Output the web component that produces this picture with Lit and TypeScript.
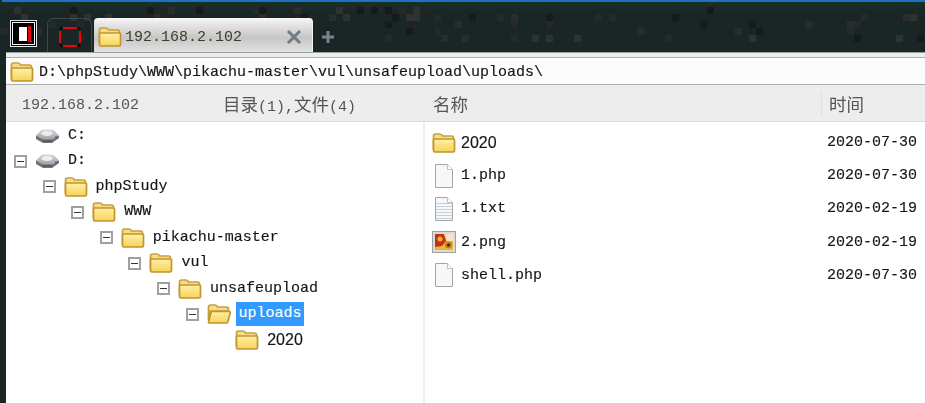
import { LitElement, html, css, svg } from "lit";
import { customElement } from "lit/decorators.js";

const folder = (open = false) => html`<svg class="ico" width="24" height="22" viewBox="0 0 24 22">
  <defs>
    <linearGradient id="fy" x1="0" y1="0" x2="0" y2="1">
      <stop offset="0" stop-color="#fff1a8" />
      <stop offset="1" stop-color="#f7d257" />
    </linearGradient>
  </defs>
  <path d="M1.500 17V4q0-2 2-2h4.500q2 0 2.500 2h9q2 0 2 2v2H3z" fill="#f6dc86" stroke="#c9a038" stroke-width="1.700" />
  ${open
    ? svg`<path d="M1.500 19 4 9.500q.3-1 1.500-1H22q1.600 0 1.200 1.500l-2.400 9q-.3 1-1.500 1H3q-1.800 0-1.500-1z" fill="url(#fy)" stroke="#c09530" stroke-width="1.700" />`
    : svg`<path d="M1.500 18.500V8q0-1 1-1h19q1 0 1 1v10.500q0 1.500-1.500 1.500H3q-1.500 0-1.500-1.500z" fill="url(#fy)" stroke="#c09530" stroke-width="1.700" />`}
</svg>`;

const drive = () => html`<svg class="ico" width="25" height="16" viewBox="0 0 25 16">
  <defs>
    <linearGradient id="dg" x1="0" y1="0" x2="0" y2="1">
      <stop offset="0" stop-color="#d9dadb" />
      <stop offset="1" stop-color="#9da0a3" />
    </linearGradient>
  </defs>
  <path d="M1 8 7 2h11l6 6v2l-7 5H8l-7-4z" fill="#6e7275" />
  <path d="M1 7.500 7 1.500h11l6 6-6.500 4H8z" fill="url(#dg)" />
  <ellipse cx="12" cy="5.500" rx="5.500" ry="2.400" fill="#eceded" />
  <path d="M8 13h9" stroke="#44484b" />
  <rect x="20" y="8.500" width="3" height="2" fill="#48659c" />
</svg>`;

const blankFile = (lines = false) => html`<svg class="ico" width="22" height="26" viewBox="0 0 22 26">
  <path d="M2.500 1.500h12l5 5v18h-17z" fill="#f7f7f7" stroke="#a5a5a5" />
  <path d="M14.500 1.500v5h5" fill="#fff" stroke="#c0c0c0" />
  ${lines
    ? svg`<path d="M3 7.500h16M3 10.500h16M3 13.500h16M3 16.500h16M3 19.500h16M3 22.500h16" stroke="#c3d0e0" />`
    : ""}
</svg>`;

const image = () => html`<svg class="ico" width="24" height="22" viewBox="0 0 24 22">
  <rect x="0.500" y="0.500" width="23" height="21" fill="#dcdad4" stroke="#a0a0a0" />
  <rect x="3" y="3" width="18" height="16" fill="#ecb23a" />
  <path d="M3 3h9l2 7-4 5-7 1z" fill="#c5301b" />
  <circle cx="8" cy="8" r="2.500" fill="#efb431" />
  <circle cx="16.500" cy="14" r="3.500" fill="#c77f16" />
  <circle cx="16.500" cy="14" r="1.500" fill="#2f2412" />
  <path d="M12 3h9v7h-6z" fill="#f2e6c8" />
</svg>`;

const tree = [
  { name: "C:", level: 0, box: false, icon: "drive" },
  { name: "D:", level: 0, box: true, icon: "drive" },
  { name: "phpStudy", level: 1, box: true, icon: "folder" },
  { name: "WWW", level: 2, box: true, icon: "folder" },
  { name: "pikachu-master", level: 3, box: true, icon: "folder" },
  { name: "vul", level: 4, box: true, icon: "folder" },
  { name: "unsafeupload", level: 5, box: true, icon: "folder" },
  { name: "uploads", level: 6, box: true, icon: "open", selected: true },
  { name: "2020", level: 7, box: false, icon: "folder", digits: true },
];

const files = [
  { name: "2020", date: "2020-07-30", icon: () => folder(), digits: true },
  { name: "1.php", date: "2020-07-30", icon: () => blankFile() },
  { name: "1.txt", date: "2020-02-19", icon: () => blankFile(true) },
  { name: "2.png", date: "2020-02-19", icon: () => image() },
  { name: "shell.php", date: "2020-07-30", icon: () => blankFile() },
];

// speckled wallpaper behind the tab strip
const specks = () => {
  const rnd = (n: number) => {
    const v = Math.sin(n * 12.9898) * 43758.5453;
    return v - Math.floor(v);
  };
  const out = [];
  for (let i = 1; i <= 90; i++) {
    const x = Math.floor(rnd(i) * 132) * 7;
    const y = 7 + Math.floor(rnd(i + 500) * 5) * 7;
    const fill = ["#2a2d2c", "#303231", "#161a1a", "#252928"][Math.floor(rnd(i + 900) * 4)];
    out.push(svg`<rect x=${x} y=${y} width="7" height="7" fill=${fill} />`);
  }
  return out;
};

@customElement("app-root")
export class AppRoot extends LitElement {
  static styles = css`
    :host {
      display: block;
      position: relative;
      width: 925px;
      height: 403px;
      overflow: hidden;
      background: linear-gradient(#1b3029 0, #1a2525 14px) #1a2525;
      font-family: "Liberation Mono", monospace;
      font-size: 15px;
      color: #151515;
    }
    .specks {
      position: absolute;
      left: 0;
      top: 0;
    }
    .topline {
      position: absolute;
      left: 2px;
      right: 0;
      top: 0;
      height: 2px;
      background: #1c73c4;
    }
    .window {
      position: relative;
      display: flex;
      flex-direction: column;
      height: 403px;
      padding-left: 6px;
      box-sizing: border-box;
      filter: blur(0.3px);
    }
    .tabs {
      height: 52px;
      box-sizing: border-box;
      padding: 18px 0 0 4px;
      display: flex;
      align-items: flex-start;
    }
    .logo {
      width: 27px;
      height: 27px;
      margin-top: 2px;
    }
    .logo svg {
      display: block;
    }
    .ghost {
      width: 45px;
      height: 34px;
      box-sizing: border-box;
      margin-left: 10px;
      padding-top: 3px;
      border: 1px solid #39484a;
      border-bottom: none;
      border-radius: 6px 6px 0 0;
      display: flex;
      align-items: center;
      justify-content: center;
    }
    .tab {
      width: 219px;
      height: 34px;
      box-sizing: border-box;
      margin-left: 2px;
      padding: 3px 10px 0 4px;
      border-radius: 4px 4px 0 0;
      border-right: 1px solid #f4f4f4;
      background: linear-gradient(#f8f8f8 0, #e6e6e6 18%, #c6c6c6 58%, #e2e2e2 100%);
      display: flex;
      align-items: center;
      gap: 3px;
      color: #3d3d2c;
    }
    .tab .title {
      flex: 1;
      padding-top: 1px;
    }
    .plus {
      margin: 12px 0 0 8px;
    }
    .strip {
      height: 4px;
      background: #eceded;
      border-top: 1px solid #9aa0a0;
    }
    .address {
      height: 24px;
      padding: 2px 0 0 4px;
      display: flex;
      align-items: center;
      gap: 5px;
      background: #fcfcfc;
      border-top: 1px solid #a9aeae;
      border-bottom: 1px solid #a9aeae;
      -webkit-text-stroke: 0.15px currentColor;
    }
    .address span {
      padding-top: 1px;
    }
    .head {
      height: 35px;
      padding-top: 1px;
      display: flex;
      align-items: center;
      background: #ededed;
      border-bottom: 1px solid #dcdcdc;
      font-family: "Noto Sans CJK SC", sans-serif;
      font-size: 17.500px;
      color: #555;
    }
    .mono {
      font-family: "Liberation Mono", monospace;
      font-size: 15px;
    }
    .head .host {
      width: 201px;
      padding: 3px 0 0 16px;
    }
    .head .count {
      width: 210px;
    }
    .head .name {
      width: 388px;
    }
    .head .time {
      padding-left: 7px;
      border-left: 1px solid #dfdfdf;
    }
    .body {
      flex: 1;
      display: flex;
      background: #fff;
      min-height: 0;
      -webkit-text-stroke: 0.15px currentColor;
    }
    .left {
      width: 419px;
      flex: none;
      box-sizing: border-box;
      padding-top: 1px;
      border-right: 2px solid #eeeeee;
    }
    .node {
      height: 25.500px;
      display: flex;
      align-items: center;
    }
    .box {
      width: 13px;
      height: 13px;
      box-sizing: border-box;
      border: 2px solid #a0a0a0;
      flex: none;
      margin-right: 8px;
      display: flex;
      align-items: center;
      justify-content: center;
    }
    .box::after {
      content: "";
      width: 7px;
      height: 1px;
      background: #333;
    }
    .box.none {
      border-color: transparent;
    }
    .box.none::after {
      display: none;
    }
    .ico {
      flex: none;
      display: block;
    }
    .label {
      margin-left: 5px;
      padding: 0 2px 0 3px;
      line-height: 24px;
    }
    .label.selected {
      background: #3399ff;
      color: #fff;
    }
    .digits {
      font-family: "Liberation Sans", sans-serif;
      font-size: 16px;
    }
    .right {
      flex: 1;
      padding-top: 4px;
    }
    .row {
      height: 33.200px;
      display: flex;
      align-items: center;
      padding-left: 7px;
    }
    .cell {
      width: 24px;
      margin-right: 5px;
      flex: none;
      display: flex;
      justify-content: center;
    }
    .row .fname {
      width: 366px;
      flex: none;
    }
  `;

  render() {
    return html`
      <svg class="specks" width="925" height="52">${specks()}</svg>
      <div class="topline"></div>
      <div class="window">
        <div class="tabs">
          <div class="logo">
            <svg width="27" height="27" viewBox="0 0 27 27">
              <rect x="0.500" y="0.500" width="26" height="26" fill="#000" stroke="#e8e8e8" />
              <rect x="2.500" y="2.500" width="22" height="22" fill="#000" stroke="#f4f4f4" />
              <rect x="9" y="7" width="8" height="14" fill="#fff" />
              <path d="M18 6h3v15h1v1h-4z" fill="#e8000c" />
            </svg>
          </div>
          <div class="ghost">
            <svg width="24" height="22" viewBox="0 0 24 22">
              <path d="M5 2h14M5 20h14M2 5v12M22 5v12" stroke="#e2060e" stroke-width="2" />
              <path d="M2 3.500l2-2M20 1.500l2 2M2 18.500l2 2M22 18.500l-2 2" stroke="#000" stroke-width="2" />
            </svg>
          </div>
          <div class="tab">
            ${folder()}
            <span class="title">192.168.2.102</span>
            <svg width="16" height="16" viewBox="0 0 16 16">
              <path d="M2 2l12 12M14 2L2 14" stroke="#6f7c88" stroke-width="3" />
            </svg>
          </div>
          <svg class="plus" width="14" height="14" viewBox="0 0 14 14">
            <path d="M7 1v12M1 7h12" stroke="#75848c" stroke-width="3" />
          </svg>
        </div>
        <div class="strip"></div>
        <div class="address">
          ${folder()}<span>D:\\phpStudy\\WWW\\pikachu-master\\vul\\unsafeupload\\uploads\\</span>
        </div>
        <div class="head">
          <span class="host mono">192.168.2.102</span>
          <span class="count">目录<span class="mono">(1),</span>文件<span class="mono">(4)</span></span>
          <span class="name">名称</span>
          <span class="time">时间</span>
        </div>
        <div class="body">
          <div class="left">
            ${tree.map(
              (n) => html`<div class="node" style="padding-left:${8 + n.level * 28.6}px">
                <span class="box ${n.box ? "" : "none"}"></span>
                ${n.icon === "drive" ? drive() : folder(n.icon === "open")}
                <span class="label ${n.selected ? "selected" : ""} ${n.digits ? "digits" : ""}"
                  >${n.name}</span
                >
              </div>`
            )}
          </div>
          <div class="right">
            ${files.map(
              (f) => html`<div class="row">
                <span class="cell">${f.icon()}</span>
                <span class="fname ${f.digits ? "digits" : ""}">${f.name}</span>
                <span>${f.date}</span>
              </div>`
            )}
          </div>
        </div>
      </div>
    `;
  }
}
